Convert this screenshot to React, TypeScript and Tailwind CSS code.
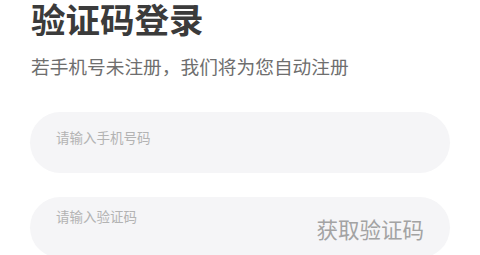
export default function App() {
  return (
    <div
      className="h-[255px] w-[480px] overflow-hidden bg-white px-[30px]"
      style={{fontFamily: '"Noto Sans CJK SC", "Noto Sans", sans-serif'}}>
      {/* Header */}
      <h1 className="pl-[1px] text-[34.5px] font-bold leading-[36px] text-[#3b3b3b]">验证码登录</h1>
      <p className="mt-[18px] pl-[1px] text-[18.7px] leading-[24px] text-[#6e6e6e]">
        若手机号未注册，我们将为您自动注册
      </p>

      {/* Phone input */}
      <div className="mt-[34px] h-[61px] w-[420px] rounded-full bg-[#f5f5f7] pl-[26px] pt-[12px]">
        <span className="text-[13.5px] leading-[18px] text-[#b3b3b3]">请输入手机号码</span>
      </div>

      {/* Code input */}
      <div className="mt-[24px] flex h-[61px] w-[420px] items-start justify-between rounded-full bg-[#f5f5f7] pl-[26px] pr-[26px] pt-[10px]">
        <span className="text-[13.5px] leading-[18px] text-[#b3b3b3]">请输入验证码</span>
        <span className="mt-[8px] text-[21.5px] leading-[28px] text-[#a3a3a3]">获取验证码</span>
      </div>
    </div>
  )
}
